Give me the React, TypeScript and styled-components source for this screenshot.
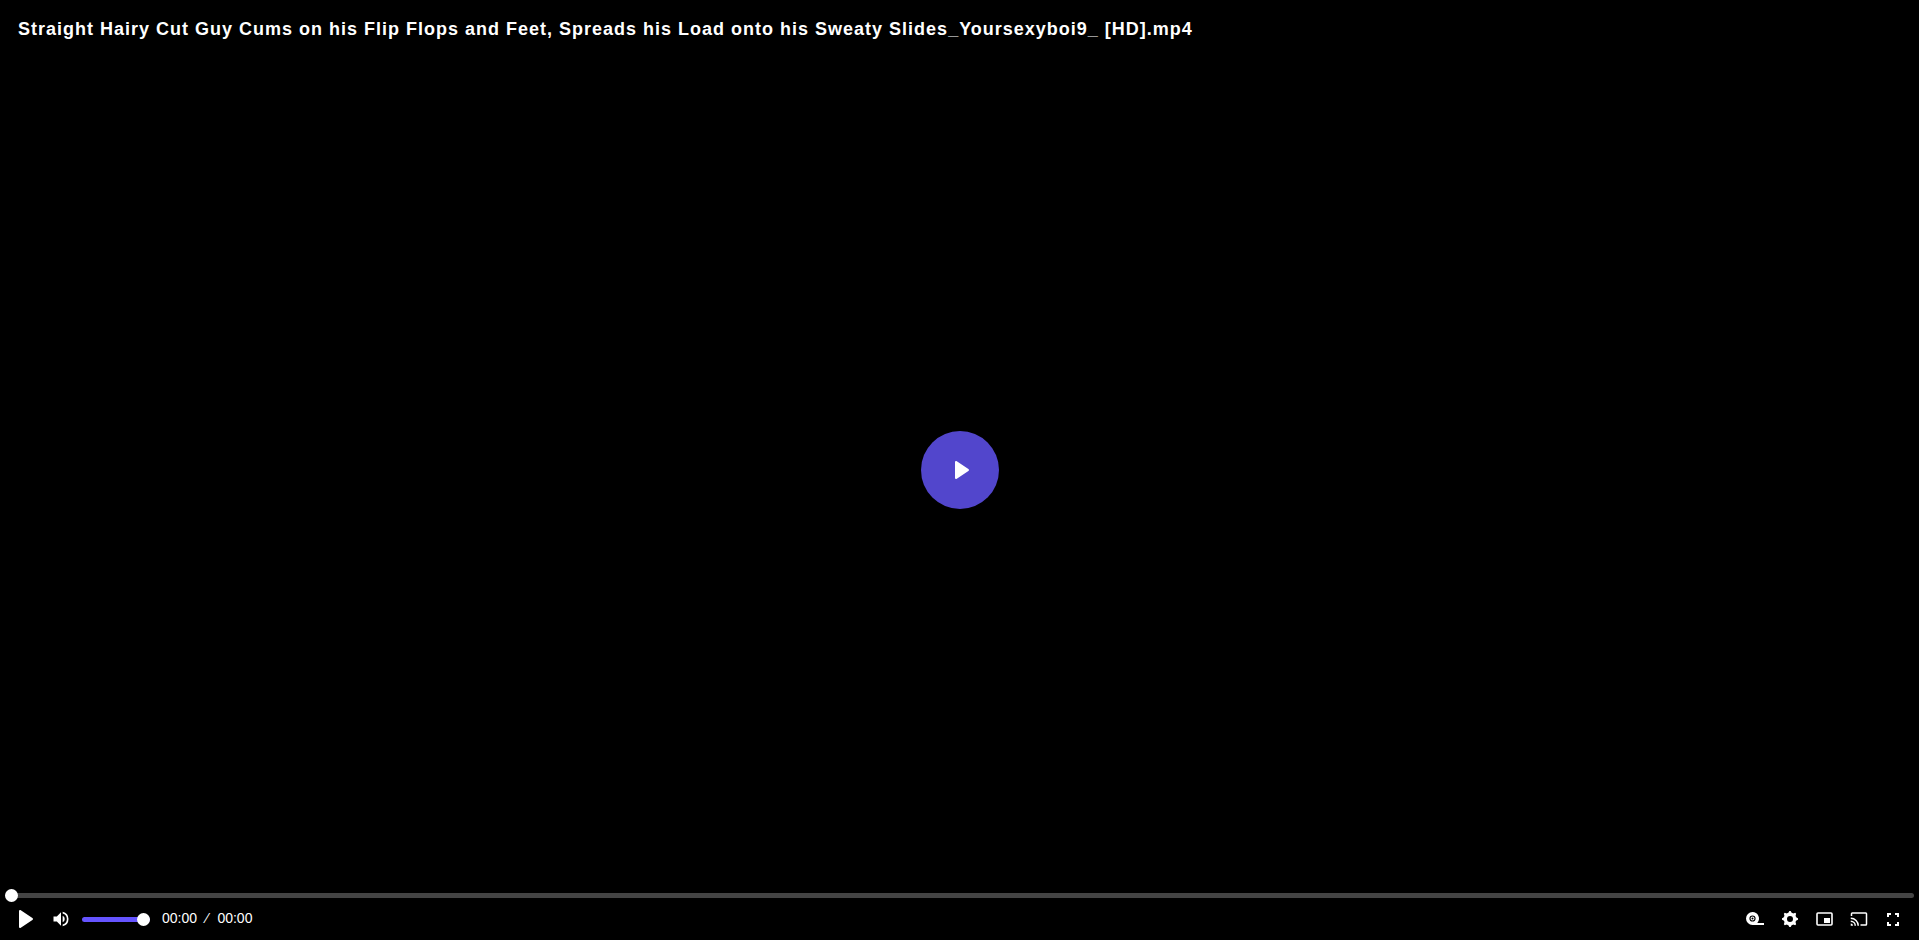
import React, { useState } from "react";
import styled, { createGlobalStyle } from "styled-components";

const GlobalStyle = createGlobalStyle`
  * { box-sizing: border-box; }
  body {
    margin: 0;
    background: #000;
    color: #fff;
    font-family: "Liberation Sans", Arial, sans-serif;
  }
`;

const Player = styled.main`
  position: relative;
  display: flex;
  flex-direction: column;
  justify-content: space-between;
  min-height: 100vh;
  overflow: hidden;
  background: #000;
`;

const Title = styled.h1`
  margin: 0;
  padding: 18px;
  font-size: 18px;
  line-height: 22px;
  font-weight: 700;
  letter-spacing: 1px;
`;

const Overlay = styled.div`
  position: absolute;
  inset: 0;
  display: grid;
  place-items: center;
  pointer-events: none;
`;

const IconButton = styled.button<{ $width: number }>`
  display: flex;
  align-items: center;
  justify-content: center;
  width: ${(p) => p.$width}px;
  height: 34px;
  padding: 0;
  border: 0;
  background: none;
  color: #fff;
  cursor: pointer;
`;

const BigPlay = styled(IconButton)`
  height: 78px;
  padding-left: 4px;
  border-radius: 50%;
  background: #5246cc;
  pointer-events: auto;
`;

const Controls = styled.section`
  position: relative;
  z-index: 1;
  padding: 0 5px 4px;
`;

const Slider = styled.input<{ $color: string }>`
  appearance: none;
  display: block;
  width: 100%;
  height: 13px;
  margin: 0;
  background: none;
  cursor: pointer;

  &::-webkit-slider-runnable-track {
    height: 5px;
    border-radius: 3px;
    background: ${(p) => p.$color};
  }

  &::-webkit-slider-thumb {
    appearance: none;
    width: 13px;
    height: 13px;
    margin-top: -4px;
    border-radius: 50%;
    background: #fff;
  }
`;

const VolumeSlider = styled(Slider)`
  width: 68px;
  margin: 0 12px 0 3px;
`;

const Row = styled.div`
  display: flex;
  align-items: center;
  justify-content: space-between;
  padding: 0 4px;
`;

const Group = styled.div`
  display: flex;
  align-items: center;
`;

const Time = styled.div`
  display: flex;
  gap: 9px;
  font-size: 14px;
  line-height: 16px;
  padding-bottom: 2px;
`;

const Icon = styled.svg`
  display: block;
  fill: currentColor;
`;

const PlayIcon = () => (
  <Icon width="14" height="18" viewBox="0 0 14 18" aria-hidden="true">
    <path d="M0 1C0 0 1 -.2 1.8.3L13.4 8c.8.5.8 1.500 0 2L1.800 17.700C1 18.200 0 18 0 17z" />
  </Icon>
);

const VolumeIcon = () => (
  <Icon width="20" height="20" viewBox="0 0 24 24" aria-hidden="true">
    <path d="M3 9v6h4l5 5V4L7 9zm13.500 3a4.500 4.500 0 0 0-2.500-4.030v8.050A4.470 4.470 0 0 0 16.500 12zM14 3.230v2.060a7 7 0 0 1 0 13.420v2.060a9 9 0 0 0 0-17.540z" />
  </Icon>
);

const TapeIcon = () => (
  <Icon width="18" height="14" viewBox="0 0 18 14" aria-hidden="true">
    <path
      fillRule="evenodd"
      d="M6.500 0a6.500 6.500 0 0 1 5 10.600V11H18v2H6.500a6.500 6.500 0 0 1 0-13zm0 3.400a3.100 3.100 0 1 0 0 6.200 3.100 3.100 0 0 0 0-6.200z"
    />
    <path fillRule="evenodd" d="M6.500 4.500a2 2 0 1 1 0 4 2 2 0 0 1 0-4zm0 1a1 1 0 1 0 0 2 1 1 0 0 0 0-2z" />
  </Icon>
);

const GearIcon = () => (
  <Icon width="16" height="16" viewBox="0 0 16 16" aria-hidden="true">
    <circle cx="8" cy="8" r="4.700" fill="none" stroke="currentColor" strokeWidth="3.400" />
    {[0, 45, 90, 135, 180, 225, 270, 315].map((angle) => (
      <path key={angle} d="M6.200 2.200 7.300 0h1.400l1.100 2.200z" transform={`rotate(${angle} 8 8)`} />
    ))}
  </Icon>
);

const PipIcon = () => (
  <Icon width="17" height="14" viewBox="0 0 17 14" aria-hidden="true">
    <rect x="1" y="1" width="15" height="12" rx="1" fill="none" stroke="currentColor" strokeWidth="1.600" />
    <rect x="8" y="6" width="6" height="5" />
  </Icon>
);

const CastIcon = () => (
  <Icon width="18" height="18" viewBox="0 0 24 24" aria-hidden="true">
    <path d="M21 3H3a2 2 0 0 0-2 2v3h2V5h18v14h-7v2h7a2 2 0 0 0 2-2V5a2 2 0 0 0-2-2zM1 18v3h3a3 3 0 0 0-3-3zm0-4v2a5 5 0 0 1 5 5h2a7 7 0 0 0-7-7zm0-4v2a9 9 0 0 1 9 9h2A11 11 0 0 0 1 10z" />
  </Icon>
);

const FullscreenIcon = () => (
  <Icon width="12" height="13" viewBox="0 0 12 13" aria-hidden="true">
    <path d="M0 0h4v2H2v2H0zM8 0h4v4h-2V2H8zM0 9h2v2h2v2H0zM10 9h2v4H8v-2h2z" />
  </Icon>
);

const tools = [
  { label: "Playback speed", width: 36, icon: <TapeIcon /> },
  { label: "Settings", width: 34, icon: <GearIcon /> },
  { label: "Picture in picture", width: 34, icon: <PipIcon /> },
  { label: "Cast", width: 35, icon: <CastIcon /> },
  { label: "Fullscreen", width: 34, icon: <FullscreenIcon /> },
];

export default function App() {
  const [position, setPosition] = useState(0);
  const [volume, setVolume] = useState(100);

  return (
    <>
      <GlobalStyle />
      <Player>
        <Title>
          Straight Hairy Cut Guy Cums on his Flip Flops and Feet, Spreads his Load onto his Sweaty
          Slides_Yoursexyboi9_ [HD].mp4
        </Title>
        <Overlay>
          <BigPlay $width={78} type="button" aria-label="Play video">
            <PlayIcon />
          </BigPlay>
        </Overlay>
        <Controls aria-label="Player controls">
          <Slider
            $color="#444"
            type="range"
            aria-label="Seek"
            value={position}
            onChange={(e) => setPosition(Number(e.target.value))}
          />
          <Row>
            <Group>
              <IconButton $width={34} type="button" aria-label="Play">
                <PlayIcon />
              </IconButton>
              <IconButton $width={36} type="button" aria-label="Mute">
                <VolumeIcon />
              </IconButton>
              <VolumeSlider
                $color="#6554ff"
                type="range"
                aria-label="Volume"
                value={volume}
                onChange={(e) => setVolume(Number(e.target.value))}
              />
              <Time>
                <span>00:00</span>
                <span>⁄</span>
                <span>00:00</span>
              </Time>
            </Group>
            <Group>
              {tools.map((tool) => (
                <IconButton key={tool.label} $width={tool.width} type="button" aria-label={tool.label}>
                  {tool.icon}
                </IconButton>
              ))}
            </Group>
          </Row>
        </Controls>
      </Player>
    </>
  );
}
